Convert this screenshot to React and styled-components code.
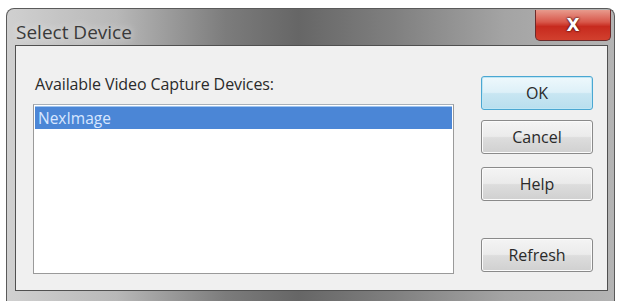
import React, { useState } from 'react'
import styled, { createGlobalStyle } from 'styled-components';

const GlobalStyle = createGlobalStyle`
  body {
    margin: 0;
    background: #ffffff;
    font-family: "Open Sans", "DejaVu Sans", sans-serif;
  }
`;

const Window = styled.div`
  margin: 8px 0 0 6px;
  width: 609px;
  height: 293px;
  box-sizing: border-box;
  border: 1px solid #5a5a5a;
  border-bottom: none;
  border-radius: 8px 8px 0 0;
  background: linear-gradient(90deg, #d0d0d0 0%, #b8b8b8 18%, #7c7c7c 36%, #666666 48%, #808080 64%, #a4a4a4 82%, #b4b4b4 100%);
  display: flex;
  flex-direction: column;
  padding: 0 6px 10px 8px;
`;

const TitleBar = styled.div`
  height: 36px;
  display: flex;
  align-items: flex-start;
  justify-content: space-between;
`;

const Title = styled.span`
  margin: 10px 0 0 1px;
  font-size: 19px;
  color: #3a3a3a;
  text-shadow: 0 0 8px rgba(255, 255, 255, 0.7);
`;

const CloseBtn = styled.button`
  margin: 1px -3px 0 0;
  width: 76px;
  height: 31px;
  border: 1px solid #6b2a2a;
  border-top: none;
  border-radius: 0 0 5px 5px;
  background: linear-gradient(180deg, #e89a8c 0%, #d8574a 40%, #c72a1e 55%, #d2402e 100%);
  color: #ffffff;
  font-family: "DejaVu Sans", sans-serif;
  font-weight: bold;
  font-size: 17px;
  text-shadow: 0 0 2px #4a1010, 0 0 2px #4a1010;
  padding: 0;
`;

const Client = styled.div`
  flex: 1;
  background: #f0f0f0;
  border: 1px solid #505050;
  display: flex;
  padding: 0 14px 0 17px;
`;

const LeftCol = styled.div`
  width: 422px;
  padding-top: 28px;
`;

const Label = styled.div`
  font-size: 16px;
  line-height: 20px;
  color: #2a2a2a;
  letter-spacing: -0.1px;
  padding-left: 2px;
`;

const ListBox = styled.div`
  margin-top: 10px;
  height: 170px;
  box-sizing: border-box;
  background: #ffffff;
  border: 1px solid #9a9a9a;
  border-top-color: #a8b0b8;
  padding: 1px;
`;

const Item = styled.div`
  height: 22px;
  line-height: 22px;
  padding-left: 3px;
  font-size: 15.5px;
  color: ${p => (p.$selected ? '#d8e6ff' : '#222')};
  background: ${p => (p.$selected ? '#4b86d6' : 'transparent')};
  border-top: 1px solid ${p => (p.$selected ? '#9ec4f0' : 'transparent')};
`;

const RightCol = styled.div`
  margin-left: 27px;
  padding-top: 30px;
  display: flex;
  flex-direction: column;
  width: 112px;
`;

const Btn = styled.button`
  margin-top: ${p => p.$mt}px;
  height: 34px;
  width: 112px;
  box-sizing: border-box;
  border-radius: 3px;
  border: 1px solid ${p => (p.$primary ? '#4aa7d2' : '#8a8a8a')};
  box-shadow: inset 0 0 0 1px ${p => (p.$primary ? '#bfe6f4' : '#fbfbfb')};
  background: ${p =>
    p.$primary
      ? 'linear-gradient(180deg, #eef8fc 0%, #ddf0f8 48%, #c8e6f2 52%, #b8deee 100%)'
      : 'linear-gradient(180deg, #f4f4f4 0%, #ebebeb 48%, #dddddd 52%, #d0d0d0 100%)'};
  font-family: "Open Sans", "DejaVu Sans", sans-serif;
  font-size: 16px;
  color: #2a2a2a;
  padding: 0;
`;

export default function App() {
  const [selected, setSelected] = useState(0);
  const devices = ['NexImage'];

  return (
    <>
      <GlobalStyle />
      <Window>
        <TitleBar>
          <Title>Select Device</Title>
          <CloseBtn>X</CloseBtn>
        </TitleBar>
        <Client>
          <LeftCol>
            <Label>Available Video Capture Devices:</Label>
            <ListBox>
              {devices.map((d, i) => (
                <Item key={d} $selected={i === selected} onClick={() => setSelected(i)}>{d}</Item>
              ))}
            </ListBox>
          </LeftCol>
          <RightCol>
            <Btn $primary $mt={0}>OK</Btn>
            <Btn $mt={10}>Cancel</Btn>
            <Btn $mt={13}>Help</Btn>
            <Btn $mt={37}>Refresh</Btn>
          </RightCol>
        </Client>
      </Window>
    </>
  )
}
